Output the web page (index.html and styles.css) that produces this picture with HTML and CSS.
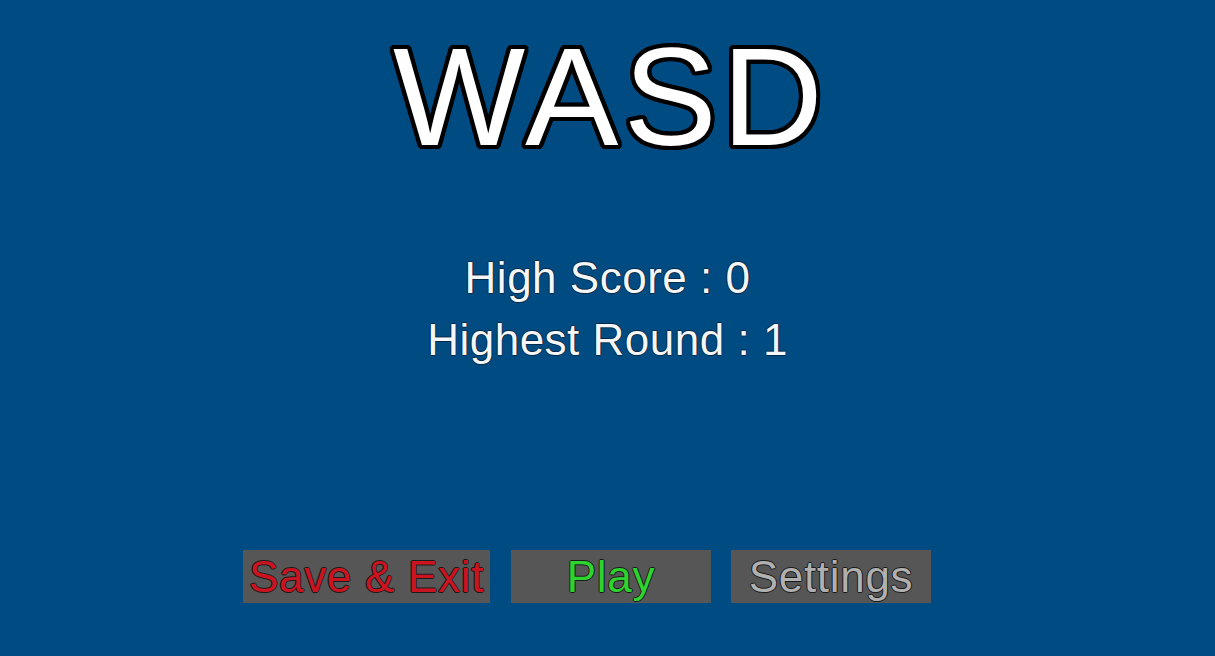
FILE: index.html
```html
<!DOCTYPE html>
<html lang="en">
<head>
<meta charset="utf-8">
<title>WASD</title>
<link rel="stylesheet" href="styles.css">
</head>
<body>
<main class="menu">
  <h1 class="title">WASD</h1>
  <section class="stats">
    <p class="stat">High Score : 0</p>
    <p class="stat">Highest Round : 1</p>
  </section>
  <nav class="buttons">
    <button class="btn btn-exit">Save &amp; Exit</button>
    <button class="btn btn-play">Play</button>
    <button class="btn btn-settings">Settings</button>
  </nav>
</main>
</body>
</html>
```
FILE: styles.css
```css
html, body {
  margin: 0;
  padding: 0;
}
body {
  width: 1215px;
  height: 656px;
  background: #004b82;
  font-family: "Liberation Sans", Arial, sans-serif;
  overflow: hidden;
}
.menu {
  display: flex;
  flex-direction: column;
  align-items: center;
}
.title {
  margin: 27px 0 0 0;
  padding-left: 6px;
  font-size: 140px;
  line-height: 140px;
  letter-spacing: 5px;
  font-weight: normal;
  color: #ffffff;
  text-shadow:
    4px 0 0 #000, -4px 0 0 #000, 0 4px 0 #000, 0 -4px 0 #000,
    3px 3px 0 #000, -3px 3px 0 #000, 3px -3px 0 #000, -3px -3px 0 #000,
    4px 2px 0 #000, -4px 2px 0 #000, 4px -2px 0 #000, -4px -2px 0 #000,
    2px 4px 0 #000, -2px 4px 0 #000, 2px -4px 0 #000, -2px -4px 0 #000;
}
.stats {
  margin-top: 80px;
  display: flex;
  flex-direction: column;
  align-items: center;
}
.stat {
  margin: 0;
  font-size: 44px;
  line-height: 62px;
  letter-spacing: 0.5px;
  color: #f4f6f8;
  text-shadow:
    1px 0 0 rgba(0,20,40,0.6), -1px 0 0 rgba(0,20,40,0.6),
    0 1px 0 rgba(0,20,40,0.6), 0 -1px 0 rgba(0,20,40,0.6);
}
.buttons {
  align-self: stretch;
  margin-top: 179px;
  padding-left: 243px;
  display: flex;
  gap: 20px;
}
.btn {
  height: 53px;
  width: 200px;
  padding: 0;
  border: none;
  background: #565656;
  font-family: "Liberation Sans", Arial, sans-serif;
  font-size: 44px;
  line-height: 53px;
  letter-spacing: 0.7px;
  white-space: nowrap;
  text-shadow:
    1px 0 0 #1a1a1a, -1px 0 0 #1a1a1a, 0 1px 0 #1a1a1a, 0 -1px 0 #1a1a1a;
}
.btn-exit {
  width: 247px;
  margin-right: 1px;
  color: #cc1420;
}
.btn-play {
  color: #2ed42e;
}
.btn-settings {
  color: #b0b0b0;
}
```
